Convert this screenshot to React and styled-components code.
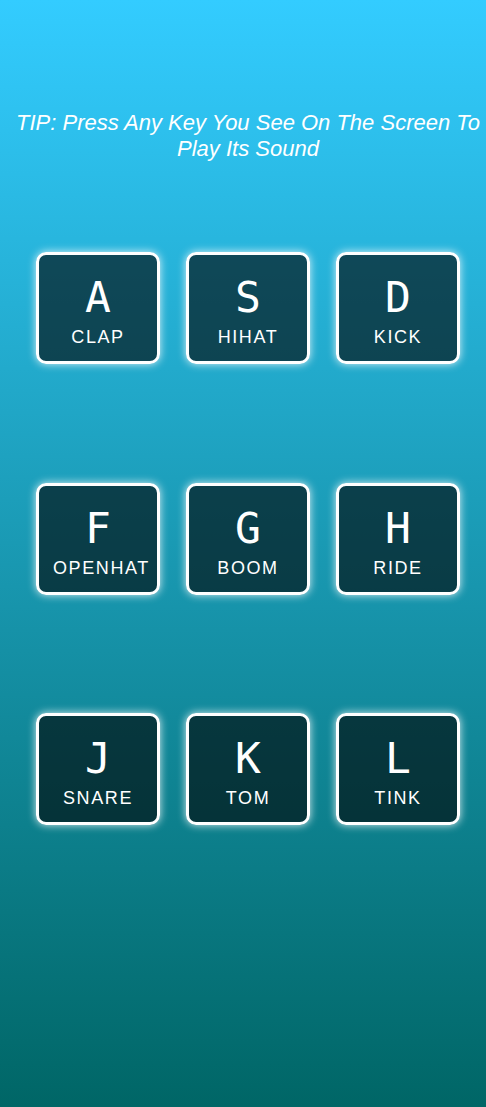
import styled, { createGlobalStyle } from 'styled-components'

const GlobalStyle = createGlobalStyle`
  html, body {
    margin: 0;
    padding: 0;
  }

  body {
    min-height: 100vh;
    background: linear-gradient(to bottom, #33ccff, #006666);
    background-attachment: fixed;
  }
`

const Page = styled.div`
  min-height: 100vh;
  box-sizing: border-box;
  padding-top: 110px;
  font-family: "Liberation Sans", Arial, sans-serif;
  color: white;
`

const Tip = styled.p`
  margin: 0;
  padding: 0 0 0 10px;
  text-align: center;
  font-size: 22px;
  font-style: italic;
`

const Keys = styled.div`
  display: grid;
  grid-template-columns: repeat(3, 124px);
  column-gap: 26px;
  row-gap: 118.5px;
  justify-content: start;
  padding-left: 36px;
  margin-top: 90px;
`

const Key = styled.div`
  box-sizing: border-box;
  height: 112px;
  border: 3px solid white;
  border-radius: 10px;
  background: rgba(0, 0, 0, 0.6);
  box-shadow: 0 0 9px rgba(255, 255, 255, 0.85);
  padding: 21px 14px 0;
  text-align: center;
`

const Letter = styled.kbd`
  display: block;
  font-family: "DejaVu Sans Mono", monospace;
  font-size: 43px;
  line-height: 43px;
`

const Sound = styled.span`
  display: block;
  margin-top: 8px;
  font-size: 18px;
  letter-spacing: 0.1rem;
  text-transform: uppercase;
  white-space: nowrap;
`

const keys = [
  ['A', 'clap'],
  ['S', 'hihat'],
  ['D', 'kick'],
  ['F', 'openhat'],
  ['G', 'boom'],
  ['H', 'ride'],
  ['J', 'snare'],
  ['K', 'tom'],
  ['L', 'tink'],
]

export default function App() {
  return (
    <>
      <GlobalStyle />
      <Page>
        <Tip>TIP: Press Any Key You See On The Screen To Play Its Sound</Tip>
        <Keys>
          {keys.map(([letter, sound]) => (
            <Key key={letter}>
              <Letter>{letter}</Letter>
              <Sound>{sound}</Sound>
            </Key>
          ))}
        </Keys>
      </Page>
    </>
  )
}
